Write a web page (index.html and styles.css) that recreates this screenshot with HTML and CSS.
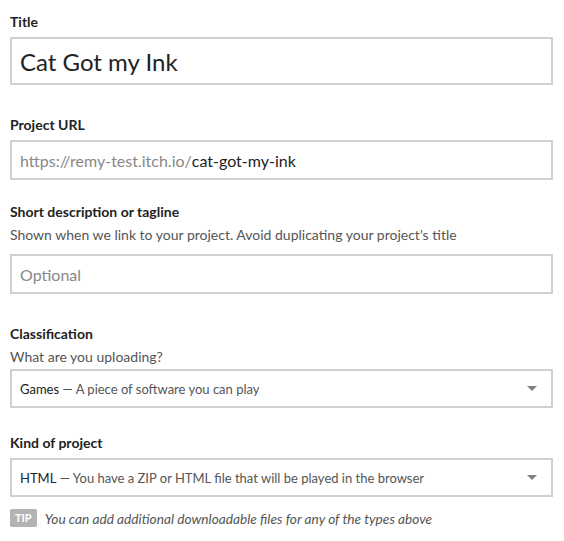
FILE: index.html
```html
<!DOCTYPE html>
<html>
<head>
<meta charset="utf-8">
<link rel="stylesheet" href="styles.css">
</head>
<body>
<form class="form">
  <div class="field field-title">
    <div class="label">Title</div>
    <div class="box box-large">Cat Got my Ink</div>
  </div>

  <div class="field field-url">
    <div class="label">Project URL</div>
    <div class="box"><span class="prefix">https://remy-test.itch.io/</span><span>cat-got-my-ink</span></div>
  </div>

  <div class="field field-desc">
    <div class="label">Short description or tagline</div>
    <div class="hint hint-spaced">Shown when we link to your project. Avoid duplicating your project's title</div>
    <div class="box"><span class="placeholder">Optional</span></div>
  </div>

  <div class="field field-class">
    <div class="label">Classification</div>
    <div class="hint">What are you uploading?</div>
    <div class="box select"><span class="opt-main">Games</span><span class="opt-desc">&nbsp;— A piece of software you can play</span><span class="arrow"></span></div>
  </div>

  <div class="field field-kind">
    <div class="label">Kind of project</div>
    <div class="box select"><span class="opt-main">HTML</span><span class="opt-desc">&nbsp;— You have a ZIP or HTML file that will be played in the browser</span><span class="arrow"></span></div>
  </div>

  <div class="tip-row">
    <span class="tip-badge">TIP</span>
    <span class="tip-text">You can add additional downloadable files for any of the types above</span>
  </div>
</form>
</body>
</html>
```

FILE: styles.css
```css
html, body {
  margin: 0;
  padding: 0;
  background: #ffffff;
}

body {
  font-family: Lato, "Open Sans", sans-serif;
  color: #222222;
}

.form {
  display: flex;
  flex-direction: column;
  padding: 12px 11px 10px 10px;
}

.field {
  display: flex;
  flex-direction: column;
}

.label {
  font-size: 14px;
  font-weight: bold;
  line-height: 20px;
  color: #222222;
}

.hint {
  font-size: 14px;
  line-height: 20px;
  color: #555555;
  margin-top: 3px;
  margin-bottom: -3px;
}

.hint-spaced {
  margin-bottom: 4px;
}

.box {
  box-sizing: border-box;
  display: flex;
  align-items: center;
  height: 40px;
  margin-top: 5px;
  padding: 0 8px;
  border: 2px solid #d0d0d0;
  font-size: 16px;
  color: #222222;
  white-space: nowrap;
}

.box-large {
  height: 48px;
  font-size: 24px;
}

.prefix {
  color: #888888;
}

.placeholder {
  color: #888888;
}

.select {
  height: 39px;
  font-size: 13px;
}

.opt-main {
  color: #222222;
}

.opt-desc {
  color: #555555;
}

.arrow {
  margin-left: auto;
  margin-right: 6px;
  width: 0;
  height: 0;
  border-left: 5px solid transparent;
  border-right: 5px solid transparent;
  border-top: 5px solid #808080;
}

.field-title { margin-bottom: 30px; }
.field-url { margin-bottom: 22px; }
.field-desc { margin-bottom: 30px; }
.field-class { margin-bottom: 25px; }
.field-kind { margin-bottom: 12px; }

.tip-row {
  display: flex;
  align-items: center;
  gap: 8px;
}

.tip-badge {
  display: inline-block;
  background: #b3b3b3;
  color: #ffffff;
  font-size: 11px;
  font-weight: bold;
  line-height: 18px;
  padding: 0 5px;
  border-radius: 2px;
}

.tip-text {
  font-size: 13.7px;
  font-style: italic;
  color: #555555;
}
```
